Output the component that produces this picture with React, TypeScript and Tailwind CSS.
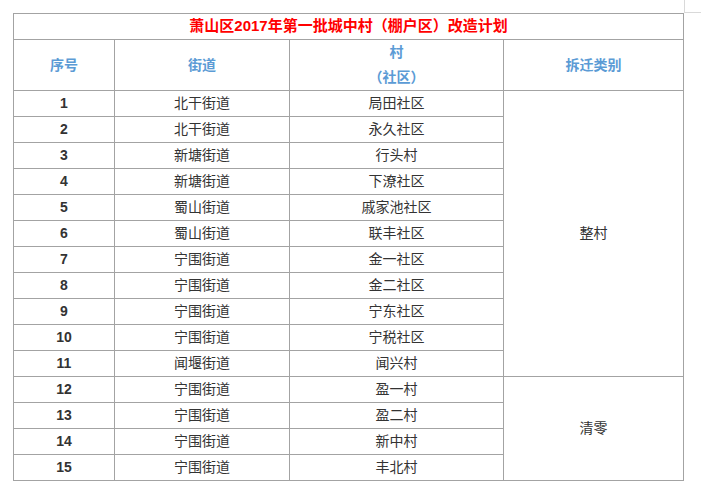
const rows: [string, string, string][] = [
  ["1", "北干街道", "局田社区"],
  ["2", "北干街道", "永久社区"],
  ["3", "新塘街道", "行头村"],
  ["4", "新塘街道", "下潦社区"],
  ["5", "蜀山街道", "戚家池社区"],
  ["6", "蜀山街道", "联丰社区"],
  ["7", "宁围街道", "金一社区"],
  ["8", "宁围街道", "金二社区"],
  ["9", "宁围街道", "宁东社区"],
  ["10", "宁围街道", "宁税社区"],
  ["11", "闻堰街道", "闻兴村"],
  ["12", "宁围街道", "盈一村"],
  ["13", "宁围街道", "盈二村"],
  ["14", "宁围街道", "新中村"],
  ["15", "宁围街道", "丰北村"],
]

const cell = "border border-[#a3a3a3] p-0 text-center align-middle"

export default function App() {
  return (
    <div
      className="relative w-[701px] h-[488px] bg-white overflow-hidden"
      style={{ fontFamily: '"Liberation Sans", "Noto Sans CJK SC", sans-serif' }}
    >
      {/* page corner mark */}
      <div className="absolute left-[684px] top-0 w-[17px] h-[13px] border-l border-b border-[#d9d9d9]" />

      <table className="absolute left-[13px] top-[13px] w-[670px] table-fixed border-collapse text-[14px] text-[#333]">
        <colgroup>
          <col className="w-[101px]" />
          <col className="w-[175px]" />
          <col className="w-[214px]" />
          <col className="w-[180px]" />
        </colgroup>
        <tbody>
          <tr className="h-[26px]">
            <td colSpan={4} className={`${cell} text-[15px] font-bold text-[#ff0000]`}>
              萧山区2017年第一批城中村（棚户区）改造计划
            </td>
          </tr>
          <tr className="h-[51px]">
            <td className={`${cell} font-bold text-[#5b9bd5]`}>序号</td>
            <td className={`${cell} font-bold text-[#5b9bd5]`}>街道</td>
            <td className={`${cell} font-bold text-[#5b9bd5] leading-[25px]`}>
              村<br />（社区）
            </td>
            <td className={`${cell} font-bold text-[#5b9bd5]`}>拆迁类别</td>
          </tr>
          {rows.map(([n, street, village], i) => (
            <tr key={n} className="h-[26px]">
              <td className={`${cell} font-bold`}>{n}</td>
              <td className={cell}>{street}</td>
              <td className={cell}>{village}</td>
              {i === 0 && (
                <td rowSpan={11} className={cell}>整村</td>
              )}
              {i === 11 && (
                <td rowSpan={4} className={cell}>清零</td>
              )}
            </tr>
          ))}
        </tbody>
      </table>
    </div>
  )
}
